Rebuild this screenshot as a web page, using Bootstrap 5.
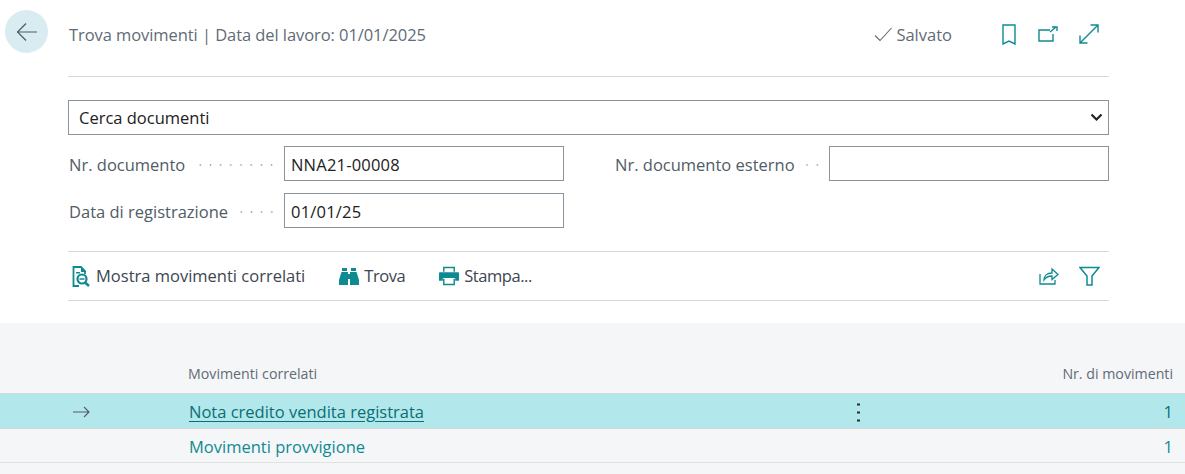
<!DOCTYPE html>
<html lang="it">
<head>
<meta charset="utf-8">
<title>Trova movimenti</title>
<link href="https://cdn.jsdelivr.net/npm/bootstrap@5.3.0/dist/css/bootstrap.min.css" rel="stylesheet">
<style>
html,body{height:474px;overflow:hidden}
body{font-family:"Open Sans","Noto Sans",sans-serif;font-size:16.5px;color:#212121;background:#fff}
.rail{width:68px;flex:none;padding:10px 0 0 5px}
.backbtn{width:43px;height:43px;background:#d8ecf2;color:#505c66;border:0;padding:0}
.mainpane{width:1041px;flex:none}
.headbar{height:77px;border-bottom:1px solid #d6d8da;padding-bottom:8px}
.ptitle{color:#5f6b76;margin-left:1px;letter-spacing:-.07px;padding-top:2px}
.saved{color:#5f6b76;margin-right:49px}
.saved span{padding-top:2px}
.headicons{gap:21px;margin-right:10px}
.teal{color:#0f8a92}
.form-select.docsel{margin-top:23px;height:35px;border:1px solid #8a949c;border-radius:0;padding:2px 30px 0 10px;font-size:16.5px;color:#212121;background-image:url("data:image/svg+xml,%3csvg xmlns='http://www.w3.org/2000/svg' viewBox='0 0 13 9'%3e%3cpath fill='none' stroke='%23222' stroke-width='2.200' d='M1.500 1.500 6.500 6.500 11.500 1.500'/%3e%3c/svg%3e");background-size:13px 9px;background-position:right 5px center}
.fieldgrid{display:grid;grid-template-columns:496px 495px;column-gap:50px;row-gap:12px;margin-top:11px}
.lab{color:#505c66;white-space:nowrap;padding:3px 0 0 1px}
.dots{height:2px;margin:3px 7px 0 7px;background-image:radial-gradient(circle,#a9afb5 .9px,transparent 1.1px);background-size:10.2px 2px;background-position:right;background-repeat:repeat-x}
.fld{width:280px;height:35px;flex:none;border:1px solid #8a949c;border-radius:0;padding:2px 6px 0;font-size:16.5px;color:#212121;letter-spacing:.2px}
.toolbar{margin-top:23px;height:50px;border-top:1px solid #d6d8da;border-bottom:1px solid #d6d8da;padding:0 9px 0 4px}
.toolbtn{color:#3c4650;font-size:16.5px;border:0;padding:0;margin-right:34px;gap:5px}
.toolbtn.snug{letter-spacing:-.45px}
.toolright{gap:20px}
.lowerpane{background:#f5f6f8;margin-top:22px;height:151px;padding-top:39px}
.cols{display:grid;grid-template-columns:188px 669px 3px 1fr;align-items:center}
.colhead{height:31px;padding-bottom:8px;font-size:14.2px;color:#5f6b76}
.colhead>:last-child,.rw>:last-child{text-align:right;padding-right:12px}
.rw{height:35px;border-top:1px solid #d6d8da;padding-top:2px}
.rw a{color:#0f8a92;text-decoration:none;padding-left:1px}
.rw .num{color:#0f8a92}
.rw.sel{background:#b2e8eb}
.rw.sel a{color:#0b6e75;text-decoration:underline;text-underline-offset:3px}
.rw.sel .num{color:#0b6e75}
.rw.last{border-bottom:1px solid #e0e2e4;padding-top:3px}
.rowarrow{padding-left:73px;color:#505c66;line-height:0}
.kebab{display:block;width:3px;height:19px;background-image:radial-gradient(circle,#2b2b2b 1.300px,transparent 1.500px);background-size:3px 8px;background-position:center}
</style>
</head>
<body>
<div class="d-flex">
  <div class="rail">
    <button class="backbtn rounded-circle d-flex align-items-center justify-content-center" aria-label="Indietro">
      <svg width="22" height="20" viewBox="0 0 22 20" fill="none" stroke="currentColor" stroke-width="1.2"><path d="M21 10H1.500M10 1.500 1.500 10l8.500 8.500"/></svg>
    </button>
  </div>
  <div class="mainpane">
    <div class="headbar d-flex align-items-center">
      <div class="ptitle flex-grow-1">Trova movimenti | Data del lavoro: 01/01/2025</div>
      <div class="saved d-flex align-items-center gap-1">
        <svg width="18" height="15" viewBox="0 0 18 15" fill="none" stroke="#5f6b76" stroke-width="1.1"><path d="M1 8.500 6 13.500 17.500 1"/></svg>
        <span>Salvato</span>
      </div>
      <div class="headicons d-flex align-items-center teal">
        <svg width="16" height="21" viewBox="0 0 16 21" fill="none" stroke="currentColor" stroke-width="1.400"><path d="M2 1h12v19l-6-3-6 3z"/></svg>
        <svg width="20" height="16" viewBox="0 0 20 16" fill="none" stroke="currentColor" stroke-width="1.400"><path d="M12 4H1v11h14V8M12 6l6-5M14 1h5v4"/></svg>
        <svg width="20" height="20" viewBox="0 0 20 20" fill="none" stroke="currentColor" stroke-width="1.400"><path d="M1.500 18.500 18.500 1.500M11.500 1h7.500v7.500M1 11.500V19h7.500"/></svg>
      </div>
    </div>
    <select class="form-select docsel"><option>Cerca documenti</option></select>
    <div class="fieldgrid">
      <div class="d-flex align-items-center">
        <span class="lab">Nr. documento</span><span class="dots flex-grow-1"></span>
        <input class="form-control fld" value="NNA21-00008">
      </div>
      <div class="d-flex align-items-center">
        <span class="lab">Nr. documento esterno</span><span class="dots flex-grow-1"></span>
        <input class="form-control fld" value="">
      </div>
      <div class="d-flex align-items-center">
        <span class="lab">Data di registrazione</span><span class="dots flex-grow-1"></span>
        <input class="form-control fld" value="01/01/25">
      </div>
    </div>
    <div class="toolbar d-flex align-items-center">
      <button class="btn toolbtn d-flex align-items-center">
        <svg width="19" height="21" viewBox="0 0 19 21"><path fill="none" stroke="#0f8a92" stroke-width="1.800" d="M7 20H1.500V1H9l4 4v3"/><path fill="#0f8a92" d="M9 1v5h5zM4 6h4v1.500H4z"/><circle cx="10" cy="13" r="4.500" fill="#fff" stroke="#0f8a92" stroke-width="2.200"/><path d="M7.500 13h5" stroke="#0f8a92" stroke-width="1.500"/><path d="m13 16.500 4 3.500" stroke="#0f8a92" stroke-width="2.500"/></svg>
        <span>Mostra movimenti correlati</span>
      </button>
      <button class="btn toolbtn snug d-flex align-items-center">
        <svg width="20" height="17" viewBox="0 0 20 17" fill="#0f8a92"><path d="M3 0h5v3H3zM12 0h5v3h-5zM2.500 4H9v13H0v-5zM11 4h6.500L20 12v5h-9zM8 6h4v5H8z"/></svg>
        <span>Trova</span>
      </button>
      <button class="btn toolbtn snug d-flex align-items-center">
        <svg width="20" height="20" viewBox="0 0 21 20"><path fill="#0f8a92" d="M1 6h19a1 1 0 0 1 1 1v8h-4v-3H4v3H0V7a1 1 0 0 1 1-1z"/><path fill="none" stroke="#0f8a92" stroke-width="1.500" d="M5 5.500V1h11v4.500M5 13v6h11v-6"/></svg>
        <span>Stampa...</span>
      </button>
      <div class="ms-auto d-flex align-items-center toolright teal">
        <svg width="20" height="18" viewBox="0 0 20 18" fill="none" stroke="currentColor" stroke-width="1.300"><path d="M1 7v10h15v-4"/><path d="M5 13c0-4 3-7 8-7V2l6 5.500-6 5V9c-3 0-6 1-8 4z"/></svg>
        <svg width="21" height="20" viewBox="0 0 21 20" fill="none" stroke="currentColor" stroke-width="1.500"><path d="M1 1.500h19l-7 8.500v9H8v-9z"/></svg>
      </div>
    </div>
  </div>
</div>
<div class="lowerpane">
  <div class="cols colhead"><span></span><span>Movimenti correlati</span><span></span><span>Nr. di movimenti</span></div>
  <div class="cols rw sel">
    <span class="rowarrow">
      <svg width="17" height="12" viewBox="0 0 17 12" fill="none" stroke="currentColor" stroke-width="1.100"><path d="M0 6h16M11 1l5 5-5 5"/></svg>
    </span>
    <span><a href="#">Nota credito vendita registrata</a></span>
    <span class="kebab"></span>
    <span class="num">1</span>
  </div>
  <div class="cols rw last">
    <span></span>
    <span><a href="#">Movimenti provvigione</a></span>
    <span></span>
    <span class="num">1</span>
  </div>
</div>
<script src="https://cdn.jsdelivr.net/npm/bootstrap@5.3.0/dist/js/bootstrap.bundle.min.js"></script>
</body>
</html>
